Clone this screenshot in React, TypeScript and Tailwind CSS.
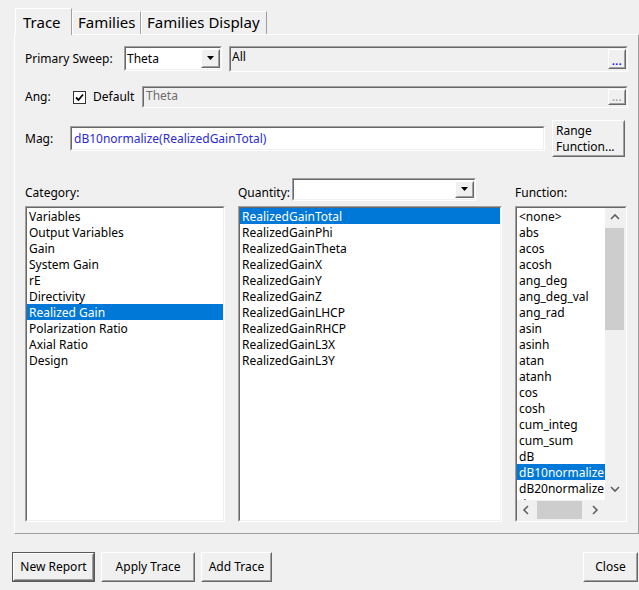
import React from "react";

function Sunken({ className = "", inner = "", children }: { className?: string; inner?: string; children?: React.ReactNode }) {
  return (
    <div className={`border border-t-[#a0a0a0] border-l-[#a0a0a0] border-b-white border-r-white ${className}`}>
      <div className={`w-full h-full border border-t-[#696969] border-l-[#696969] border-b-[#f0f0f0] border-r-[#f0f0f0] ${inner}`}>
        {children}
      </div>
    </div>
  );
}

function Raised({ className = "", inner = "", children }: { className?: string; inner?: string; children?: React.ReactNode }) {
  return (
    <div className={`border border-t-white border-l-white border-b-[#696969] border-r-[#696969] bg-[#f0f0f0] ${className}`}>
      <div className={`w-full h-full border border-t-[#f0f0f0] border-l-[#f0f0f0] border-b-[#a0a0a0] border-r-[#a0a0a0] ${inner}`}>
        {children}
      </div>
    </div>
  );
}

function DownTri() {
  return (
    <svg width="9" height="5" viewBox="0 0 9 5">
      <polygon points="1,0 8,0 4.5,4" fill="#000" />
    </svg>
  );
}

function Chevron({ dir }: { dir: "up" | "down" | "left" | "right" }) {
  const pts: Record<string, string> = {
    up: "1,6 5,2 9,6",
    down: "1,2 5,6 9,2",
    left: "6,1 2,5 6,9",
    right: "3,1 7,5 3,9",
  };
  return (
    <svg width="10" height="10" viewBox="0 0 10 10">
      <polyline points={pts[dir]} fill="none" stroke="#606060" strokeWidth="1.6" />
    </svg>
  );
}

function ComboBox({ className, text }: { className: string; text?: string }) {
  return (
    <Sunken className={className} inner="bg-white flex items-stretch">
      <div className="flex-1 pl-[1px] flex items-center leading-none">{text}</div>
      <Raised className="w-[19px] my-[1px]" inner="flex items-center justify-center">
        <DownTri />
      </Raised>
    </Sunken>
  );
}

function ItemList({ items, selected }: { items: string[]; selected: number }) {
  return (
    <div className="flex flex-col">
      {items.map((it, i) => (
        <div
          key={it + i}
          className={`h-[16px] leading-[18px] pl-[2px] whitespace-nowrap ${i === selected ? "bg-[#0078d7] text-white" : "text-black"}`}
        >
          {it}
        </div>
      ))}
    </div>
  );
}

const categories = [
  "Variables",
  "Output Variables",
  "Gain",
  "System Gain",
  "rE",
  "Directivity",
  "Realized Gain",
  "Polarization Ratio",
  "Axial Ratio",
  "Design",
];

const quantities = [
  "RealizedGainTotal",
  "RealizedGainPhi",
  "RealizedGainTheta",
  "RealizedGainX",
  "RealizedGainY",
  "RealizedGainZ",
  "RealizedGainLHCP",
  "RealizedGainRHCP",
  "RealizedGainL3X",
  "RealizedGainL3Y",
];

const functions = [
  "<none>",
  "abs",
  "acos",
  "acosh",
  "ang_deg",
  "ang_deg_val",
  "ang_rad",
  "asin",
  "asinh",
  "atan",
  "atanh",
  "cos",
  "cosh",
  "cum_integ",
  "cum_sum",
  "dB",
  "dB10normalize",
  "dB20normalize",
  "dBc",
];

function Tab({ label, selected }: { label: string; selected?: boolean }) {
  return (
    <div
      className={`border-t border-l border-t-white border-l-white border-r border-r-[#a0a0a0] bg-[#f0f0f0] flex items-start px-[5px] ${
        selected ? "h-[27px] -mb-[1px] relative z-10 pt-[3px] pl-[7px]" : "h-[23px] pt-[0px]"
      }`}
    >
      <span className="text-[15px] leading-[20px] text-black whitespace-nowrap">{label}</span>
    </div>
  );
}

export default function App() {
  return (
    <div className="w-[639px] h-[590px] bg-[#f0f0f0] font-['Noto_Sans',sans-serif] text-[12px] text-black overflow-hidden flex flex-col">
      {/* tab strip */}
      <div className="h-[34px] pt-[8px] pl-[15px] flex items-end">
        <div className="w-[57px] flex"><div className="flex-1"><Tab label="Trace" selected /></div></div>
        <div className="w-[69px] flex"><div className="flex-1"><Tab label="Families" /></div></div>
        <div className="w-[126px] flex"><div className="flex-1"><Tab label="Families Display" /></div></div>
      </div>

      {/* panel */}
      <div className="ml-[14px] w-[625px] h-[500px] border border-t-white border-l-white border-b-[#a0a0a0] border-r-[#a0a0a0] pl-[10px] pt-[11px] flex flex-col">
        {/* row 1 */}
        <div className="h-[26px] flex items-start">
          <div className="w-[99px] h-[26px] flex items-center">Primary Sweep:</div>
          <ComboBox className="w-[98px] h-[25px]" text="Theta" />
          <Sunken className="ml-[7px] w-[399px] h-[26px]" inner="bg-[#f0f0f0] flex items-stretch">
            <div className="flex-1 pl-[1px] pt-[1px] leading-[16px]">All</div>
            <Raised className="w-[18px] my-[1px]" inner="flex items-end justify-center pb-[1px]">
              <span className="text-[#0000ff] text-[10px] leading-[10px] font-bold tracking-[0.5px]">...</span>
            </Raised>
          </Sunken>
        </div>

        {/* row 2 */}
        <div className="mt-[14px] h-[22px] flex items-center">
          <div className="w-[48px]">Ang:</div>
          <div className="w-[13px] h-[13px] border border-[#333] bg-white flex items-center justify-center">
            <svg width="9" height="9" viewBox="0 0 9 9">
              <polyline points="1,4.5 3.5,7 8,1.5" fill="none" stroke="#000" strokeWidth="1.8" />
            </svg>
          </div>
          <div className="ml-[7px] w-[49px]">Default</div>
          <Sunken className="w-[486px] h-[22px]" inner="bg-[#f0f0f0] flex items-stretch">
            <div className="flex-1 pl-[2px] leading-[16px] text-[#6d6d6d]">Theta</div>
            <Raised className="w-[18px] my-[1px]" inner="flex items-end justify-center pb-[1px]">
              <span className="text-[#a0a0a0] text-[10px] leading-[10px] font-bold tracking-[0.5px]">...</span>
            </Raised>
          </Sunken>
        </div>

        {/* row 3 */}
        <div className="mt-[12px] h-[37px] flex items-start">
          <div className="w-[45px] h-[37px] flex items-center">Mag:</div>
          <Sunken className="mt-[6px] w-[475px] h-[25px]" inner="bg-white flex items-center pl-[2px]">
            <span className="text-[#2b2bd6]">dB10normalize(RealizedGainTotal)</span>
          </Sunken>
          <Raised className="ml-[7px] w-[73px] h-[37px]" inner="pl-[2px] pt-[1px] leading-[16px] whitespace-nowrap">
            <div>Range</div>
            <div>Function...</div>
          </Raised>
        </div>

        {/* row 4 labels */}
        <div className="mt-[21px] h-[23px] flex items-center">
          <div className="w-[213px] pt-[6px]">Category:</div>
          <div className="w-[54px] pt-[6px]">Quantity:</div>
          <ComboBox className="w-[184px] h-[23px]" />
          <div className="ml-[39px] pt-[6px]">Function:</div>
        </div>

        {/* lists */}
        <div className="mt-[5px] h-[316px] flex">
          <Sunken className="w-[200px] h-[316px]" inner="bg-white overflow-hidden">
            <ItemList items={categories} selected={6} />
          </Sunken>
          <Sunken className="ml-[13px] w-[264px] h-[316px]" inner="bg-white overflow-hidden">
            <ItemList items={quantities} selected={0} />
          </Sunken>
          <Sunken className="ml-[13px] w-[112px] h-[316px]" inner="bg-white flex flex-col overflow-hidden">
            <div className="h-[292px] flex">
              <div className="w-[88px] overflow-hidden">
                <ItemList items={functions} selected={16} />
              </div>
              <div className="w-[20px] bg-[#f0f0f0] flex flex-col">
                <div className="h-[20px] flex items-center justify-center">
                  <Chevron dir="up" />
                </div>
                <div className="h-[102px] bg-[#cdcdcd] mr-[1px]" />
                <div className="flex-1" />
                <div className="h-[20px] flex items-center justify-center">
                  <Chevron dir="down" />
                </div>
              </div>
            </div>
            <div className="h-[20px] flex bg-[#f0f0f0]">
              <div className="w-[20px] flex items-center justify-center">
                <Chevron dir="left" />
              </div>
              <div className="w-[45px] bg-[#cdcdcd] my-[1px]" />
              <div className="w-[3px]" />
              <div className="w-[20px] flex items-center justify-center">
                <Chevron dir="right" />
              </div>
              <div className="w-[20px]" />
            </div>
          </Sunken>
        </div>
      </div>

      {/* bottom buttons */}
      <div className="mt-[18px] h-[30px] pl-[12px] pr-[1px] flex">
        <div className="w-[83px] h-[30px] border border-[#5a5a5a]">
          <Raised className="w-full h-full" inner="flex items-center justify-center">New Report</Raised>
        </div>
        <Raised className="ml-[6px] w-[94px] h-[30px]" inner="flex items-center justify-center">Apply Trace</Raised>
        <Raised className="ml-[6px] w-[71px] h-[30px]" inner="flex items-center justify-center">Add Trace</Raised>
        <Raised className="ml-auto w-[55px] h-[30px]" inner="flex items-center justify-center">Close</Raised>
      </div>
    </div>
  );
}
